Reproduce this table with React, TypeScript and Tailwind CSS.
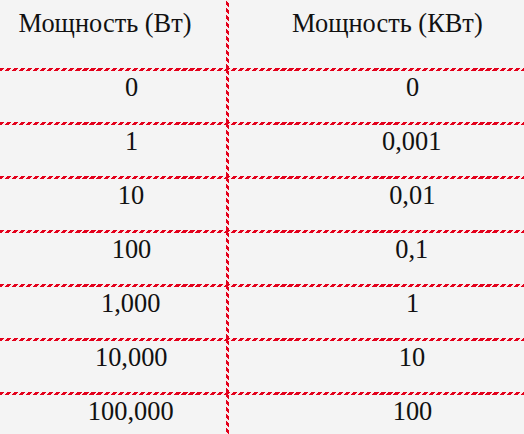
import React from 'react';

const rows: [string, string][] = [
  ['0', '0'],
  ['1', '0,001'],
  ['10', '0,01'],
  ['100', '0,1'],
  ['1,000', '1'],
  ['10,000', '10'],
  ['100,000', '100'],
];

const HLine = () => (
  <div className="h-[3px] w-full bg-[repeating-linear-gradient(135deg,#e3001b_0_3px,#fbe9ea_3px_5px)]" />
);

const VLine = () => (
  <div className="w-[3px] shrink-0 self-stretch bg-[repeating-linear-gradient(45deg,#e3001b_0_3px,#fbe9ea_3px_5px)]" />
);

const cell = "font-['Liberation_Serif'] text-[22px] leading-none text-[#111] text-center";

const Txt = ({ children }: { children: React.ReactNode }) => (
  <span className="inline-block scale-[1.2] origin-center whitespace-nowrap">{children}</span>
);

export default function App() {
  return (
    <div className="w-[524px] h-[434px] overflow-hidden bg-[#f4f4f4]">
      <div className="flex h-[68px]">
        <div className={`w-[226px] pr-[16px] pt-[13px] ${cell}`}>
          <Txt>Мощность (Вт)</Txt>
        </div>
        <VLine />
        <div className={`flex-1 pl-[21px] pt-[13px] ${cell}`}>
          <Txt>Мощность (КВт)</Txt>
        </div>
      </div>
      {rows.map(([w, kw]) => (
        <React.Fragment key={w}>
          <HLine />
          <div className="flex h-[51px]">
            <div className={`w-[226px] pl-[36px] pt-[6px] ${cell}`}>
              <Txt>{w}</Txt>
            </div>
            <VLine />
            <div className={`flex-1 pl-[71px] pt-[6px] ${cell}`}>
              <Txt>{kw}</Txt>
            </div>
          </div>
        </React.Fragment>
      ))}
    </div>
  );
}
